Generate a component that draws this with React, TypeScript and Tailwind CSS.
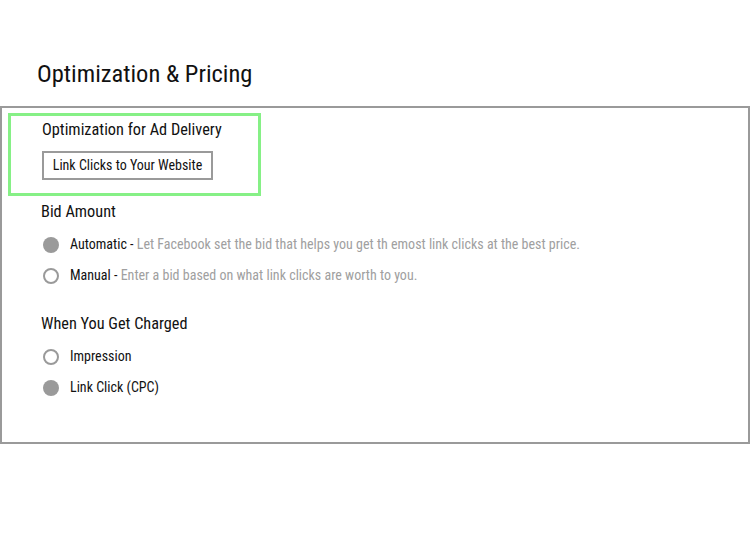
import React from 'react';

const font = { fontFamily: '"Roboto Condensed", "Roboto", sans-serif' };

function Radio({ checked }: { checked?: boolean }) {
  return checked ? (
    <span className="w-4 h-4 rounded-full bg-[#9a9a9a] shrink-0" />
  ) : (
    <span className="w-4 h-4 rounded-full border-2 border-[#9a9a9a] bg-white shrink-0" />
  );
}

function Option({ checked, label, hint }: { checked?: boolean; label: string; hint?: string }) {
  return (
    <div className="h-[31px] flex items-center pl-[41px] gap-[11px] text-[14px] whitespace-nowrap">
      <Radio checked={checked} />
      <span className="text-[#111]">
        {label}
        {hint && <span> - </span>}
        {hint && <span className="text-[#a0a0a0]">{hint}</span>}
      </span>
    </div>
  );
}

export default function App() {
  return (
    <div className="w-[750px] h-[550px] bg-white overflow-hidden" style={font}>
      <h1 className="pt-[58px] pl-[37px] h-[106px] text-[24.5px] leading-[32px] text-[#111]">Optimization &amp; Pricing</h1>

      <div className="border-2 border-[#9a9a9a] w-[750px] pb-[39px]">
        <div className="mt-[5px] ml-[6px] w-[253px] h-[83px] border-[3px] border-[#86f086] pl-[31px]">
          <div className="h-[29px] flex items-center text-[16.3px] text-[#111] whitespace-nowrap">Optimization for Ad Delivery</div>
          <div className="mt-[6px] h-[29px] w-[171px] border-2 border-[#9a9a9a] flex items-center justify-center text-[14px] text-[#111] whitespace-nowrap">
            Link Clicks to Your Website
          </div>
        </div>

        <div className="h-[33px] flex items-center pl-[39px] text-[16.3px] text-[#111]">Bid Amount</div>
        <Option checked label="Automatic" hint="Let Facebook set the bid that helps you get th emost link clicks at the best price." />
        <Option label="Manual" hint="Enter a bid based on what link clicks are worth to you." />

        <div className="mt-[17px] h-[33px] flex items-center pl-[39px] text-[16.3px] text-[#111]">When You Get Charged</div>
        <Option label="Impression" />
        <Option checked label="Link Click (CPC)" />
      </div>
    </div>
  );
}
